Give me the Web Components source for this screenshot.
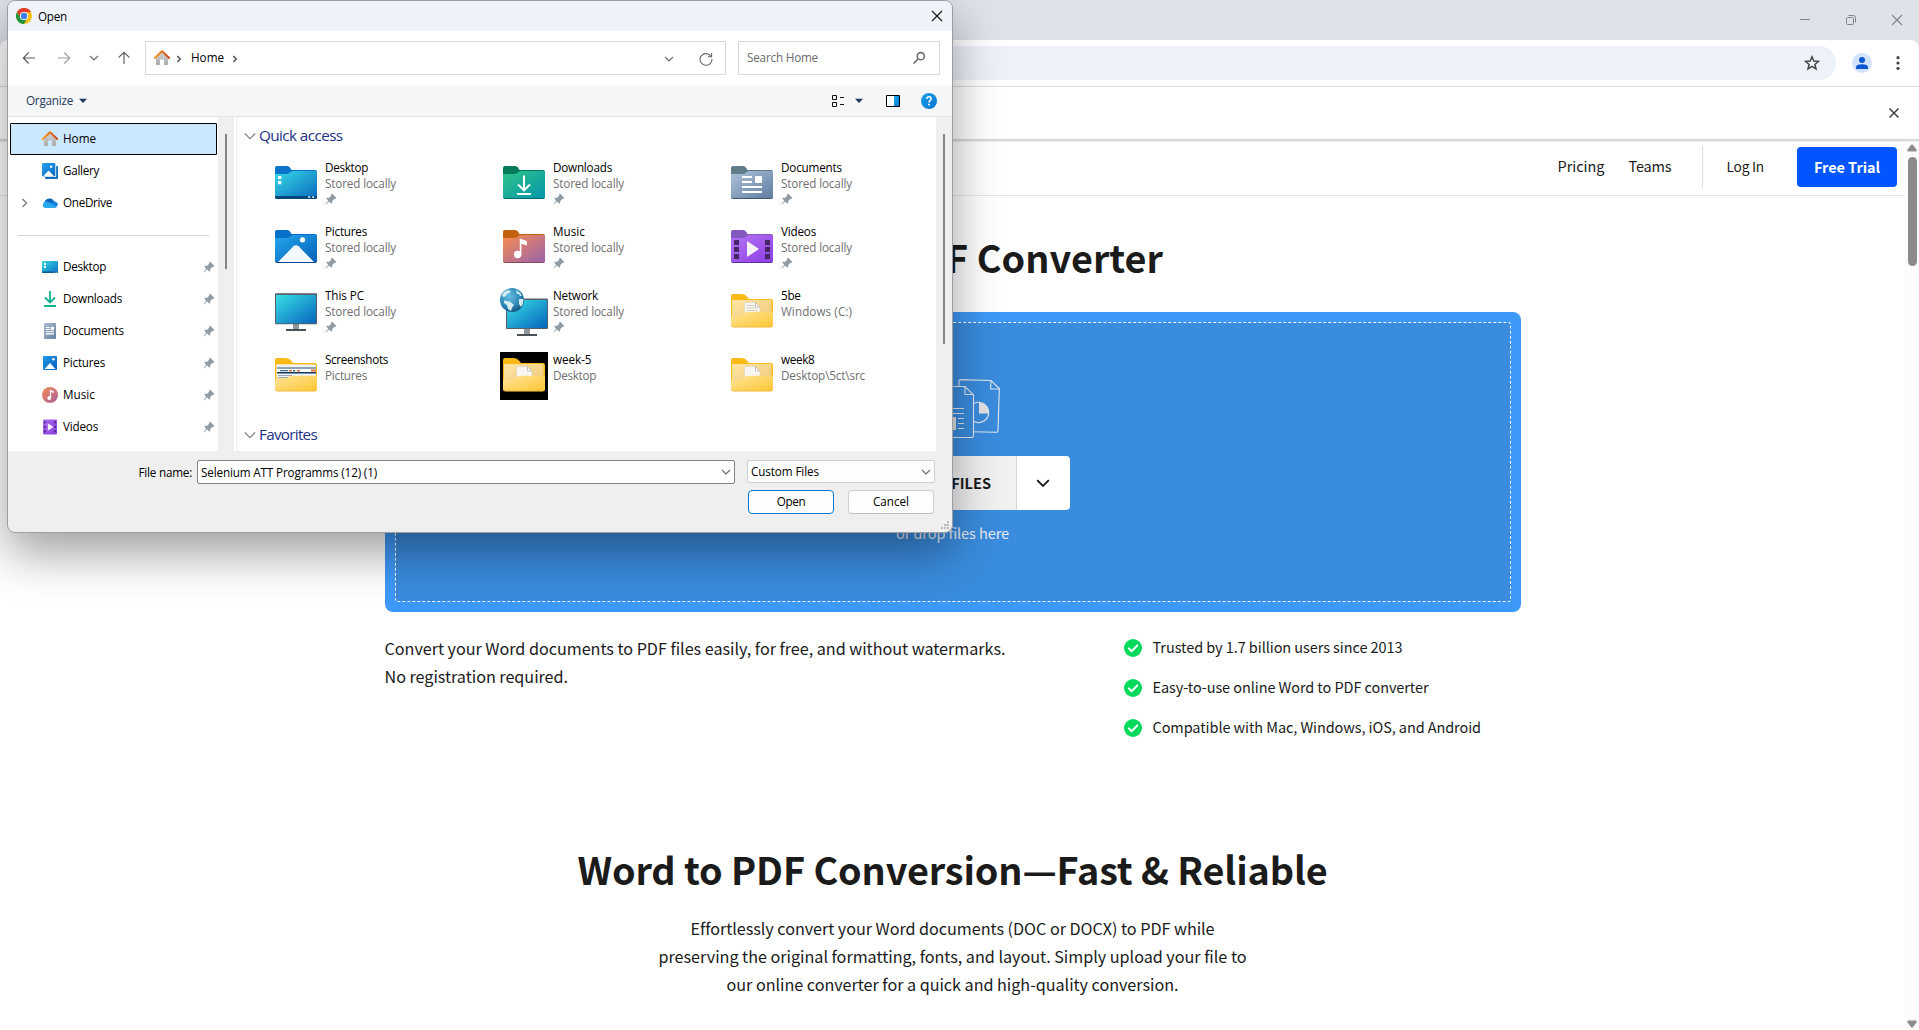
<!DOCTYPE html>
<html lang="en">
<head>
<meta charset="utf-8">
<title>Word to PDF Converter</title>
<style>
html,body{margin:0;width:1919px;height:1030px;overflow:hidden;background:#fff}
body{position:relative;font-family:"Noto Sans CJK JP","Noto Sans CJK SC","Open Sans",sans-serif;color:#1b1b1b}
</style>
</head>
<body>
<browser-chrome></browser-chrome>
<page-view></page-view>
<open-dialog></open-dialog>
<script>
const make = (tag, html, after) => customElements.define(tag, class extends HTMLElement {
  connectedCallback() {
    if (this.shadowRoot) return;
    this.attachShadow({mode: 'open'}).innerHTML = typeof html === 'function' ? html(this) : html;
    if (after) after(this);
  }
});

/* ---------- icons ---------- */
const grad = (id, a, b) => `<linearGradient id="${id}" x1="0" y1="0" x2="1" y2="1"><stop stop-color="${a}"/><stop offset="1" stop-color="${b}"/></linearGradient>`;
const folder = (tab, a, b, edge, inner) => [48, 48, `<defs>${grad('g', a, b)}</defs><g transform="translate(3 6)"><path fill="${tab}" d="M0 2Q0 0 2 0H12Q14 0 15 1.5L16.5 4H40Q42 4 42 6V12H0Z"/><path fill="${edge}" d="M0 10H42V31Q42 33 40 33H2Q0 33 0 31Z"/><path fill="url(#g)" d="M0 8H11Q13.5 8 15 6.5L16 5.7Q17 5 19 5H41Q42 5 42 6.5V30.5Q42 32 40.5 32H1.5Q0 32 0 30.5Z"/>${inner}</g>`];
const yellow = (paper, bg) => [48, 48, `<defs>${grad('g', '#ffe49a', '#ffc632')}${grad('h', '#ffe6a4', '#eec777')}</defs>${bg ? '<path d="M0 0h48v48H0z"/>' : ''}<g transform="translate(3 6)"><path fill="#fbb917" d="M0 2Q0 0 2 0H11Q14 0 16 2.5L18 5H40Q42 5 42 7V31H0Z"/><path fill="url(#h)" d="M1 6H40.5V26H1Z"/>${paper}<path fill="url(#g)" d="M0 21.7H8Q10.5 21.7 12.3 20Q14.5 17.8 17.5 17.8H42V31Q42 33.3 40 33.3H2Q0 33.3 0 31Z"/><path fill="none" stroke="#f0b93c" stroke-width=".8" d="M.4 31.2Q.6 33 2.4 33H39.6Q41.6 33 41.6 31"/></g>`];
const sheet = '<path fill="#f8f6f2" stroke="#dfd3b8" stroke-width=".6" d="M13.5 8.5H24.5L29 13V24H13.5Z"/><path fill="#fff" stroke="#bfb69f" stroke-width=".8" d="M24.5 8.5V13H29Z"/>';
const lines = '<path stroke="#d5d0c6" stroke-width="1" d="M15.5 11.5h8M15.5 14h11M15.5 16.5h11"/>';
const st = (d, c, w = 1) => `<path fill="none" stroke="${c}" stroke-width="${w}" d="${d}"/>`;
const house = [16, 16, `<defs><linearGradient id="g" x2="0" y2="1"><stop stop-color="#d5d5d5"/><stop offset="1" stop-color="#a9a9a9"/></linearGradient><linearGradient id="r"><stop stop-color="#f39a24"/><stop offset="1" stop-color="#d1451a"/></linearGradient></defs><path fill="url(#g)" d="M8 2L14 8V14Q14 15 13 15H10V9.5H6V15H3Q2 15 2 14V8Z"/><path d="M.8 8L8 1.2L15.2 8" fill="none" stroke="url(#r)" stroke-width="2" stroke-linejoin="round" stroke-linecap="round"/>`];
const ICONS = {
  house,
  chrome: [16, 16, `<circle cx="8" cy="8" r="8" fill="#fbc116"/><path fill="#e33b2e" d="M1.07 4A8 8 0 0 1 14.93 4L8 4.4L4.6 10Z"/><path fill="#229342" d="M1.07 4L4.6 10L8 12L11.4 10L8 16A8 8 0 0 1 1.07 4Z"/><circle cx="8" cy="8" r="4.1" fill="#fff"/><circle cx="8" cy="8" r="3.2" fill="#3b7ded"/>`],
  gallery: [16, 16, `<defs>${grad('g', '#27a4ec', '#0763c0')}</defs><path fill="#0b6cbf" d="M3 14H14V3H15Q16 3 16 4V14.5Q16 16 14.5 16H4Q3 16 3 15Z"/><path fill="#fff" d="M2 13h12.2V2H13v12H2z"/><rect width="13.3" height="13.5" rx="1.2" fill="url(#g)"/><path fill="#fff" d="M1 13.5L6.5 7.5L12.3 13.5Z"/><circle cx="9.2" cy="3.8" r="1.2" fill="#fff"/>`],
  onedrive: [16, 16, `<path fill="#0f63bd" d="M3 11A4.5 4.5 0 0 1 4.4 4.6A5 5 0 0 1 12.2 6.4L8 10Z"/><path fill="#1684dd" d="M10.5 6.8A3.8 3.8 0 0 1 16 10L14 12L8 9.5Z"/><path fill="#29a8ee" d="M3.3 13A3.2 3.2 0 0 1 3.6 6.7Q5.5 6.3 7.2 7.4L14.8 12.2Q14.3 13 13 13Z"/>`],
  desk: [16, 16, `<defs>${grad('g', '#35d9e4', '#0b6cc4')}</defs><rect y="2" width="16" height="12" rx="1" fill="url(#g)"/><path fill="#075c94" d="M0 12.5H16V13Q16 14 15 14H1Q0 14 0 13Z"/><path fill="#fff" d="M2 4h2v2H2zM2 7h2v2H2z"/><path fill="#fff" d="M12 12.7h1v.8h-1zM14 12.7h1v.8h-1z"/>`],
  down: [16, 16, `<path fill="none" stroke="#17b08e" stroke-width="1.8" d="M8 0V11M3 6.5L8 11.5L13 6.5"/><rect x="2" y="14" width="12" height="2" rx=".6" fill="#17b08e"/>`],
  doc: [16, 16, `<defs>${grad('g', '#adbfd5', '#647f9f')}</defs><rect x="2" width="12" height="16" rx="1" fill="url(#g)"/><path stroke="#fff" stroke-width="1.1" d="M4 4.5h3.5M4 6.5h3.5M4 8.7h8M4 10.9h8"/><path fill="#fff" d="M8.7 3.9h3.3v3.2H8.7z"/>`],
  pic: [16, 16, `<defs>${grad('g', '#1f98e6', '#0660bf')}</defs><rect x="1" y="1" width="14" height="14" rx="1" fill="url(#g)"/><path fill="#fff" d="M2.5 14L8 8L13.5 14Z"/><circle cx="11.4" cy="4.2" r="1.3" fill="#fff"/>`],
  mus: [16, 16, `<defs>${grad('g', '#f58b52', '#a8609f')}</defs><circle cx="8" cy="8" r="8" fill="url(#g)"/><path fill="none" stroke="#fff" stroke-width="1.3" d="M8.5 11V3.5L11 4.6V6"/><circle cx="7.2" cy="11" r="1.9" fill="#fff"/>`],
  vid: [16, 16, `<defs>${grad('g', '#a968ee', '#8a3fe0')}</defs><rect x="1" y=".5" width="14" height="15" rx="1" fill="url(#g)"/><path fill="#43226f" d="M2 2.5h1.7v1.8H2zM2 7h1.7v1.8H2zM2 11.5h1.7v1.8H2zM12.3 2.5H14v1.8h-1.7zM12.3 7H14v1.8h-1.7zM12.3 11.5H14v1.8h-1.7z"/><path fill="#f4f0fa" d="M5.8 4.2L11.6 8L5.8 11.8Z"/>`],
  pin: [12, 12, `<path fill="#909ba4" d="M7 .6L11.4 5L10.4 5.9L9.6 5.7L7.3 8L7.1 10L6.3 10.8L4 8.5L.8 11.4L.4 11.2L3.2 7.8L1.2 5.6L2 4.8L4.2 4.7L6.3 2.5L6.1 1.5Z"/>`],
  fDesktop: folder('#0a73cc', '#36dbe6', '#0a69be', '#084a80', '<path fill="#fff" d="M3 10h3.3v3.3H3zM3 15h3.3v3.3H3z"/><path fill="#07477c" d="M0 30H42V31Q42 33 40 33H2Q0 33 0 31Z"/><path fill="#cfe6f5" d="M33.2 30.3h2v1.7h-2zM37.2 30.3h2v1.7h-2z"/>'),
  fDownloads: folder('#05795a', '#2fc489', '#0596ab', '#046a70', '<path fill="none" stroke="#fff" stroke-width="2" d="M21 9.5V24M15 18.5L21 24.3L27 18.5"/><path fill="#fff" d="M14 27h14v2H14z"/>'),
  fDocuments: folder('#5f7c89', '#b0c3dd', '#5f7d9f', '#3f5870', '<path stroke="#fff" stroke-width="2" d="M11 11h10M11 16h10M11 21h20M11 26h20"/><rect x="24" y="10" width="7" height="7" rx="1" fill="#fff"/>'),
  fPictures: folder('#0470ca', '#25a7ed', '#045fb8', '#044c94', '<path fill="#f4f9ff" d="M3 32L18.5 16.3Q21 14 23.5 16.3L39 32Z"/><circle cx="27.5" cy="9.8" r="2.6" fill="#fff"/>'),
  fMusic: folder('#c1610f', '#f98e50', '#9a62ad', '#8a4a55', '<path fill="#fff" d="M16.8 8.4L22.6 10.4Q24 11 24 12.4V15.6L18.4 13.8V24.5H16.8Z"/><circle cx="14.6" cy="24.5" r="3.7" fill="#fff"/>'),
  fVideos: folder('#8359c0', '#b674f5', '#8c3fe2', '#5f2f9c', '<path fill="#472668" d="M3 10h5v5H3zM3 17h5v5H3zM3 24h5v5H3zM34 10h5v5h-5zM34 17h5v5h-5zM34 24h5v5h-5z"/><path fill="#f5f2f8" d="M16 11L28 19L16 27Z"/>'),
  fPC: [48, 48, `<defs>${grad('g', '#38dfe6', '#0664bd')}</defs><path fill="#8f979d" d="M21 36h6v5h-6z"/><path fill="#4a5156" d="M14 41h20v2H14z"/><rect x="3" y="5.2" width="42" height="31" rx="1" fill="#55616a"/><rect x="4" y="7" width="40" height="28.3" fill="url(#g)"/>`],
  fNetwork: [48, 48, `<defs>${grad('g', '#38dfe6', '#0664bd')}<radialGradient id="e" cx=".4" cy=".35" r=".75"><stop stop-color="#69bfe2"/><stop offset=".6" stop-color="#2a86b8"/><stop offset="1" stop-color="#123f66"/></radialGradient></defs><path fill="#8f979d" d="M24 41h6v5h-6z"/><path fill="#4a5156" d="M17 46h20v2H17z"/><rect x="6" y="10.5" width="42" height="30.5" rx="1" fill="#55616a"/><rect x="7" y="12" width="40" height="28" fill="url(#g)"/><circle cx="12" cy="12" r="12" fill="url(#e)"/><path fill="#d3edf3" d="M3 5Q6 2 9 2L11 4L7 6L6 8L4 9L2 8ZM4 12.5L10 13.5L14 17L12 19.5L11 23L8 21L7 17L4 15ZM16 2Q20 4 22 8L20 8L19 6L17 6ZM19 11L23.5 11Q23.5 16 21 19L19 16Z"/>`],
  fShots: yellow('<path fill="#eef2f4" d="M2 7H41V20H2Z"/><path fill="#8da3b5" d="M2 9h39v2H2z"/><path fill="#fff" d="M2 11h39v4H2z"/><path fill="#17365e" d="M2 14h39v1.6H2z"/><path fill="#e2743b" d="M14 12h3v1.5h-3zM22 12h3v1.5h-3zM36 11.6h5v2h-5z"/><path fill="#3e6f97" d="M5 12h8v1.2H5zM18 12h2v1.4h-2z"/><path fill="#9aa9b7" d="M3 17h14v1H3zM3 19h10v1H3z"/>'),
  fWeek5: yellow(sheet, true), fBe: yellow(sheet + lines), fWeek8: yellow(sheet),
  back: [14, 14, st('M13 7H1.5M6.7 1.5L1.3 7L6.7 12.5', '#5c5c5c', 1.15)],
  fwd: [14, 14, st('M1 7H12.5M7.3 1.5L12.7 7L7.3 12.5', '#9e9e9e', 1.15)],
  up: [14, 14, st('M7 13V1.5M1.5 6.7L7 1.3L12.5 6.7', '#5c5c5c', 1.15)],
  chev: [12, 12, st('M2 4L6 8L10 4', '#6a6a6a', 1.1)],
  chevL: [12, 12, st('M.8 3.5L6 8.7L11.2 3.5', '#7a8088', 1.1)],
  gt: [10, 10, st('M3.3 2L6.3 5L3.3 8', '#555', 1.5)],
  gtS: [12, 12, st('M3.5 2L7.5 6L3.5 10', '#808080', 1.5)],
  refresh: [14, 14, st('M12.2 4.5A6 5.8 0 1 0 13 7M12.6 1V4.7H8.9', '#6a6a6a', 1.1)],
  mag: [14, 14, `<circle cx="8.8" cy="5.2" r="3.6" fill="none" stroke="#707070" stroke-width="1.6"/>` + st('M6.2 7.8L1.5 12.5', '#707070', 1.7)],
  x: [12, 12, st('M1 1L11 11M11 1L1 11', '#1a1a1a', 1.15)],
  caret: [8, 6, '<path fill="#1e395b" d="M0 .8H8L4 5Z"/>'],
  view: [14, 14, `<path fill="none" stroke="#111" d="M1.5 1.5h4v4h-4zM1.5 8.5h4v4h-4zM9 3.5h4M9 10.5h4"/>`],
  pane: [14, 12, `<defs>${grad('g', '#1eaaf0', '#0678d4')}</defs><path fill="#fff" d="M0 0h14v12H0z"/><path fill="url(#g)" d="M8 1h5v10H8z"/><path fill="none" stroke="#000" d="M.5 .5h13v11H.5z"/>`],
  help: [16, 16, `<defs>${grad('g', '#1ba0ea', '#0874cf')}</defs><circle cx="8" cy="8" r="8" fill="url(#g)"/><path fill="none" stroke="#fff" stroke-width="1.5" d="M5.9 6V5.7A2.1 2.1 0 0 1 10.1 5.8C10.1 7.3 8 7.4 8 9.4"/><path fill="#fff" d="M7.2 10.8h1.6v1.6H7.2z"/>`],
  grip: [12, 12, '<path fill="#b9b9b9" d="M7 1h2v2H7zM4 4h2v2H4zM7 4h2v2H4zM1 7h2v2H1zM4 7h2v2H4zM7 7h2v2H7z"/>'],
  min: [12, 12, st('M1 5.5H11', '#818488')],
  max: [12, 12, st('M1.5 4.5Q1.5 3.5 2.5 3.5H7.5Q8.5 3.5 8.5 4.5V9.5Q8.5 10.5 7.5 10.5H2.5Q1.5 10.5 1.5 9.5ZM3.5 1.5H8.5Q10.5 1.5 10.5 3.5V8.5', '#818488')],
  xg: [12, 12, st('M1 1L11 11M11 1L1 11', '#818488', 1.1)],
  xd: [12, 12, st('M1.5 1.5L10.5 10.5M10.5 1.5L1.5 10.5', '#3c4043', 1.5)],
  star: [16, 16, `<path fill="none" stroke="#444746" stroke-width="1.5" stroke-linejoin="miter" d="M8 1.8L9.8 6.1L14.4 6.4L10.9 9.4L12 13.9L8 11.4L4 13.9L5.1 9.4L1.6 6.4L6.2 6.1Z"/>`],
  user: [20, 20, `<circle cx="10" cy="10" r="10" fill="#d3e3fd"/><circle cx="10" cy="7" r="3" fill="#0b57d0"/><path fill="#0b57d0" d="M4 16V14.2Q4 11.2 10 11.2T16 14.2V16Z"/>`],
  dots: [6, 16, '<g fill="#444746"><circle cx="3" cy="2.7" r="1.6"/><circle cx="3" cy="8" r="1.6"/><circle cx="3" cy="13.3" r="1.6"/></g>'],
  tri: [10, 8, '<path fill="#8b8b8b" d="M4.2 .8Q5 0 5.8 .8L9.5 5.6V7.5H.5V5.6Z"/>'],
  check: [18, 18, `<circle cx="9" cy="9" r="9" fill="#00d959"/><path fill="none" stroke="#fff" stroke-width="2" stroke-linecap="round" stroke-linejoin="round" d="M4.8 9.4L7.6 12.2L13.4 6.4"/>`],
  drop: [16, 16, st('M2.2 5.2L8 11L13.8 5.2', '#1b1b1b', 1.9)],
  files: [96, 62, `<g fill="none" stroke="#e0e7ef" stroke-width="1.1"><path d="M36 8V4Q36 2.5 34 2.6L16 3L6 12L8 52Q8 54 10 54H21"/><path fill="#3a8cde" d="M55 8V3Q55 1.6 56.5 1.6L87 2.5L95.3 10.5L94 52.5Q94 54.3 92 54.2L55 53.5Z"/><path d="M87 2.5L86.6 11H95.3"/><circle cx="74.5" cy="34.5" r="10.2"/><path fill="#e3e3e3" stroke="none" d="M75 35.5V24.5A10.5 10.5 0 0 1 85 35.5Z"/><path fill="#3a8cde" d="M22 58V10Q22 8.5 23.5 8.5H61L69.5 17V57.5Q69.5 59.5 67.5 59.5H24Q22 59.5 22 58Z"/><path d="M61 8.5V16.5H69.5M30 30.5H60M30 35.5H60M54 40.5H60M54 45.5H60M54 50.5H60"/></g><path fill="#e0e0e0" d="M30 39H52V52H30Z"/>`]
};
make('app-icon', el => {
  const [w, h, body] = ICONS[el.getAttribute('name')];
  return `<style>:host{display:block;flex:none;width:${w}px;height:${h}px}svg{display:block}</style><svg width="${w}" height="${h}" viewBox="0 0 ${w} ${h}">${body}</svg>`;
});

/* ---------- browser frame ---------- */
make('browser-chrome', `<style>
:host{display:block;height:142px;position:relative;z-index:1}
.tabs{height:40px;background:#dee2e9;display:flex;justify-content:flex-end;align-items:center;gap:34px;padding-right:16px;box-sizing:border-box}
.wrap{background:#dee2e9}
.bar{height:46px;background:#fff;border-radius:8px 8px 0 0;display:flex;align-items:center;border-bottom:1px solid #dadce0}
.omni{flex:1;height:34px;margin-left:100px;border-radius:17px;background:#ecf1fa;display:flex;align-items:center;justify-content:flex-end;padding-right:16px}
.bar app-icon[name=user]{margin:0 23px 0 16px}.bar app-icon[name=dots]{margin-right:18px}
.info{height:52px;background:#fff;display:flex;justify-content:flex-end;align-items:center;padding-right:19px}
.sh{height:3px;background:linear-gradient(#cfd1d1,#dcdede 50%,#f3f4f4)}
</style><div class="tabs"><app-icon name="min"></app-icon><app-icon name="max"></app-icon><app-icon name="xg"></app-icon></div>
<div class="wrap"><div class="bar"><div class="omni"><app-icon name="star"></app-icon></div><app-icon name="user"></app-icon><app-icon name="dots"></app-icon></div></div>
<div class="info"><app-icon name="xd"></app-icon></div><div class="sh"></div>`);

make('scroll-rail', `<style>
:host{display:flex;flex-direction:column;align-items:center;width:14px;background:#fcfcfc;padding:2px 0 2px;box-sizing:border-box}
i{width:9px;height:109px;border-radius:5px;background:#8b8b8b;margin-top:5px}
.d{margin-top:auto;transform:rotate(180deg)}
</style><app-icon name="tri"></app-icon><i></i><app-icon class="d" name="tri"></app-icon>`);

/* ---------- web page ---------- */
make('site-header', `<style>
:host{display:flex;height:53px;border-bottom:1px solid #e3e5e7;align-items:center;justify-content:flex-end;padding-right:8px;font-size:14.5px;line-height:24px;--lift:2px}
.teams{margin:0 30px 0 24px}.log{border-left:1px solid #dcdfe2;height:42px;display:flex;align-items:center;padding-left:24px;font-size:13.7px;margin-bottom:3px}
.b{margin:0 0 3px 33px;width:100px;height:40px;border-radius:4px;background:#05f;color:#fff;font-weight:700;display:flex;align-items:center;justify-content:center;--lift:1px}
.p{margin-bottom:3px}
</style><fit-text class="p" w="47">Pricing</fit-text><fit-text class="teams p" w="43">Teams</fit-text><div class="log"><fit-text w="37.5">Log In</fit-text></div><div class="b"><fit-text w="66">Free Trial</fit-text></div>`);

make('drop-zone', `<style>
:host{display:block;box-sizing:border-box;width:1136px;height:300px;margin:0 auto;padding:10px;border-radius:8px;background:#3d99f7}
.in{box-sizing:border-box;height:280px;border:1px dashed #fff;border-radius:3px;background:#3a8cde;display:flex;flex-direction:column;align-items:center;padding-top:55px}
.btn{display:flex;width:235px;height:54px;border-radius:4px;overflow:hidden;background:#fff;margin-top:16px}
.m{flex:1;background:#f1f1f1;border-right:1px solid #d5d5d5;display:flex;align-items:center;justify-content:flex-end;padding-right:25px;font-weight:700;font-size:14.6px;--lift:2px}
.c{width:52px;padding-right:1px;display:flex;align-items:center;justify-content:center}
.t{margin-top:12px;line-height:22px;font-size:14.6px;color:#e4e9ef}
.in app-icon[name=files]{margin-right:1px}
</style><div class="in"><app-icon name="files"></app-icon><div class="btn"><div class="m"><fit-text>FILES</fit-text></div><div class="c"><app-icon name="drop"></app-icon></div></div><fit-text class="t" w="113">or drop files here</fit-text></div>`);

make('check-item', el => `<style>:host{display:flex;gap:11px;height:18px;align-items:center;font-size:14.5px;line-height:18px}fit-text{margin-top:-1px}</style><app-icon name="check"></app-icon><fit-text w="${el.getAttribute('w')}"><slot></slot></fit-text>`);

make('page-view', `<style>
:host{display:flex;height:888px}
main{flex:1;display:flex;flex-direction:column;align-items:stretch}
h1,h2{margin:0;display:flex;justify-content:center;font-size:37.8px;line-height:50px;font-weight:700}
h1{width:421px;margin:36px auto 30px;justify-content:flex-end}
.two{width:1136px;margin:22px auto 0;display:flex;justify-content:space-between;font-size:16.2px;line-height:28px;height:210px}
.l{display:flex;flex-direction:column;align-items:flex-start}
.r{width:397px;display:flex;flex-direction:column;gap:22px;padding-top:5px;margin-top:-.5px}
.p{display:flex;flex-direction:column;align-items:center;font-size:16.2px;line-height:28px;margin-top:20px}
</style><main><site-header></site-header>
<h1><fit-text>F Converter</fit-text></h1>
<drop-zone></drop-zone>
<div class="two"><div class="l"><fit-text w="621">Convert your Word documents to PDF files easily, for free, and without watermarks.</fit-text><fit-text w="183.5">No registration required.</fit-text></div>
<div class="r"><check-item w="250">Trusted by 1.7 billion users since 2013</check-item><check-item w="276">Easy-to-use online Word to PDF converter</check-item><check-item w="328.5">Compatible with Mac, Windows, iOS, and Android</check-item></div></div>
<h2><fit-text w="750">Word to PDF Conversion—Fast &amp; Reliable</fit-text></h2>
<div class="p"><fit-text w="524">Effortlessly convert your Word documents (DOC or DOCX) to PDF while</fit-text><fit-text w="588">preserving the original formatting, fonts, and layout. Simply upload your file to</fit-text><fit-text w="452">our online converter for a quick and high-quality conversion.</fit-text></div>
</main><scroll-rail></scroll-rail>`);

/* ---------- file dialog ---------- */
make('side-item', el => `<style>
:host{display:flex;align-items:center;height:32px;box-sizing:border-box;margin:0 1px 0 2px;padding:0 1px 0 8px;border:1px solid transparent;border-radius:1px}
:host([selected]){background:#cce8ff;border-color:#000}
.e{width:12px;margin-right:11px}fit-text{margin:-1px auto 0 5px}
</style><div class="e">${el.hasAttribute('expand') ? '<app-icon name="gtS"></app-icon>' : ''}</div><app-icon name="${el.getAttribute('icon')}"></app-icon><fit-text w="${el.getAttribute('w')}"><slot></slot></fit-text>${el.hasAttribute('pin') ? '<app-icon name="pin"></app-icon>' : ''}`);

make('file-tile', el => `<style>
:host{display:flex;gap:5px;height:64px;line-height:16px}
.t{display:flex;flex-direction:column;align-items:flex-start;margin-top:-1px;--lift:0px}.s{color:#707070}app-icon[name=pin]{margin-top:2px}
</style><app-icon name="${el.getAttribute('icon')}"></app-icon><div class="t"><fit-text w="${el.getAttribute('w')}"><slot></slot></fit-text><fit-text class="s" w="${el.getAttribute('sw')}"><slot name="sub"></slot></fit-text>${el.hasAttribute('pin') ? '<app-icon name="pin"></app-icon>' : ''}</div>`);

make('group-title', el => `<style>:host{display:flex;align-items:center;gap:3px;height:24px;font-size:15.3px;line-height:22px;color:#1e3287}</style><app-icon name="chevL"></app-icon><fit-text w="${el.getAttribute('w')}"><slot></slot></fit-text>`);

make('thin-scroll', el => `<style>:host{display:block;flex:none;width:16px;background:#efefef}i{display:block;width:2px;height:${el.getAttribute('len')}px;margin:17px auto 0;background:#858585}</style><i></i>`);

const tiles = [['fDesktop','Desktop',43,'Stored locally',71,1],['fDownloads','Downloads',59,'Stored locally',71,1],['fDocuments','Documents',61,'Stored locally',71,1],
['fPictures','Pictures',42,'Stored locally',71,1],['fMusic','Music',32,'Stored locally',71,1],['fVideos','Videos',35,'Stored locally',71,1],
['fPC','This PC',39,'Stored locally',71,1],['fNetwork','Network',45,'Stored locally',71,1],['fBe','5be',19.5,'Windows (C:)',71],
['fShots','Screenshots',63,'Pictures',42],['fWeek5','week-5',38.5,'Desktop',43],['fWeek8','week8',33.5,'Desktop\\5ct\\src',84]];

make('open-dialog', `<style>
:host{position:absolute;left:7px;top:0;width:946px;height:533px;box-sizing:border-box;border:1px solid #9b9ea3;border-radius:8px;overflow:hidden;background:#efefef;
 box-shadow:0 20px 48px rgba(0,0,0,.38);z-index:5;display:flex;flex-direction:column;font:11.7px "Open Sans","Noto Sans",sans-serif;color:#000;--lift:2px}
.row{display:flex;align-items:center;flex:none}
.title{height:30px;background:#eff3f9;padding:0 9px 0 8px}.title fit-text{margin:1px auto 0 6px}.title app-icon{margin-top:-1px}
.nav{height:55px;box-sizing:border-box;background:#fff;padding:0 12px 1px 14px}
.box{height:34px;box-sizing:border-box;border:1px solid #d9d9d9;display:flex;align-items:center}
.addr{width:581px;margin:0 12px 0 14px;padding-left:8px}
.find{flex:1;padding:0 13px 0 8px;color:#6b6b6b;justify-content:space-between}
.tools{height:30px;background:#f4f6f8;border-bottom:1px solid #e2e4e6;padding:0 15px 0 18px;color:#1e395b}
.body{height:334px;display:flex;flex:none;background:#fff}
.side{width:210px;padding-top:6px;flex:none;--lift:1px}
.sep{height:32px;display:flex;align-items:center;padding:0 9px 0 10px}.sep i{flex:1;height:1px;background:#d3d5d8}
.main{flex:1;min-width:0;margin-left:2px;border-left:1px solid #f2f2f2;padding:7px 0 0 7px}
.grid{display:grid;grid-template-columns:228px 228px 200px;margin:12px 0 7px 28px}
.foot{display:flex;flex:1;gap:12px;padding-top:9px;align-items:flex-start;--lift:0px}
.lab{width:184px;height:24px;display:flex;align-items:center;justify-content:flex-end;margin-right:-7px}
.inp{width:538px;height:24px;box-sizing:border-box;border:1px solid #838383;border-radius:2px;background:#fff;display:flex;align-items:center;justify-content:space-between;padding:0 2px 0 3px}
.r{width:188px;--lift:1px}.sel{height:23px;box-sizing:border-box;border:1px solid #cfcfcf;border-radius:2px;background:#fdfdfd;display:flex;align-items:center;justify-content:space-between;padding:0 2px 0 3px}
.bs{display:flex;gap:14px;margin:7px 1px 0;--lift:2px}.bs div{width:86px;height:24px;box-sizing:border-box;border:1px solid #d0d0d0;border-bottom-color:#bcbcbc;border-radius:4px;background:#fdfdfd;display:flex;align-items:center;justify-content:center}.bs .ok{border-color:#0078d4}
.g{position:absolute;right:0;bottom:0}
</style>
<div class="row title"><app-icon name="chrome"></app-icon><fit-text w="29">Open</fit-text><app-icon name="x"></app-icon></div>
<div class="row nav"><app-icon name="back"></app-icon><app-icon name="fwd" style="margin-left:21px"></app-icon><app-icon name="chev" style="margin-left:17px"></app-icon><app-icon name="up" style="margin:0 0 0 17px"></app-icon>
<div class="box addr"><app-icon name="house"></app-icon><app-icon name="gt" style="margin:1px 7px 0 4px"></app-icon><fit-text w="33">Home</fit-text><app-icon name="gt" style="margin:1px auto 0 6px"></app-icon><app-icon name="chev" style="margin-top:2px"></app-icon><app-icon name="refresh" style="margin:2px 12px 0 24px"></app-icon></div>
<div class="box find"><fit-text w="71">Search Home</fit-text><app-icon name="mag"></app-icon></div></div>
<div class="row tools"><fit-text w="47">Organize</fit-text><app-icon name="caret" style="margin:0 auto 0 6px"></app-icon><app-icon name="view"></app-icon><app-icon name="caret" style="margin:0 23px 0 10px"></app-icon><app-icon name="pane"></app-icon><app-icon name="help" style="margin-left:21px"></app-icon></div>
<div class="body"><div class="side">
<side-item icon="house" selected w="33">Home</side-item><side-item icon="gallery" w="36">Gallery</side-item><side-item icon="onedrive" expand w="49">OneDrive</side-item>
<div class="sep"><i></i></div>
<side-item icon="desk" pin w="43">Desktop</side-item><side-item icon="down" pin w="59">Downloads</side-item><side-item icon="doc" pin w="61">Documents</side-item><side-item icon="pic" pin w="42">Pictures</side-item><side-item icon="mus" pin w="32">Music</side-item><side-item icon="vid" pin w="35">Videos</side-item>
</div><thin-scroll len="135"></thin-scroll>
<div class="main"><group-title w="83.5">Quick access</group-title><div class="grid">${tiles.map(t => `<file-tile icon="${t[0]}" w="${t[2]}" sw="${t[4]}"${t[5] ? ' pin' : ''}>${t[1]}<span slot="sub">${t[3]}</span></file-tile>`).join('')}</div><group-title w="58">Favorites</group-title></div>
<thin-scroll len="210"></thin-scroll></div>
<div class="foot"><div class="lab"><fit-text w="53.5">File name:</fit-text></div><div class="inp"><fit-text w="176">Selenium ATT Programms (12) (1)</fit-text><app-icon name="chev"></app-icon></div>
<div class="r"><div class="sel"><fit-text w="68">Custom Files</fit-text><app-icon name="chev"></app-icon></div><div class="bs"><div class="ok"><fit-text w="28.5">Open</fit-text></div><div><fit-text w="36">Cancel</fit-text></div></div></div></div>
<app-icon class="g" name="grip"></app-icon>`);

/* Text run tracked so that it fills the width given in w (natural width without it). --lift pads it from below, to raise it in a centred row.
   Defined last: its ancestors' styles are in place by then. */
make('fit-text', '<style>:host{display:block;flex:none;white-space:nowrap;padding-bottom:var(--lift,0px)}span{display:inline-block;white-space:nowrap}</style><span><slot></slot></span>', el => {
  if (!el.hasAttribute('w')) return;
  const s = el.shadowRoot.querySelector('span'), w = +el.getAttribute('w');
  const slot = el.querySelector('slot');
  const text = slot ? slot.assignedNodes().map(n => n.textContent).join('') : el.textContent;
  s.style.letterSpacing = (w - s.getBoundingClientRect().width) / text.trim().length + 'px';
});
</script>
</body>
</html>
